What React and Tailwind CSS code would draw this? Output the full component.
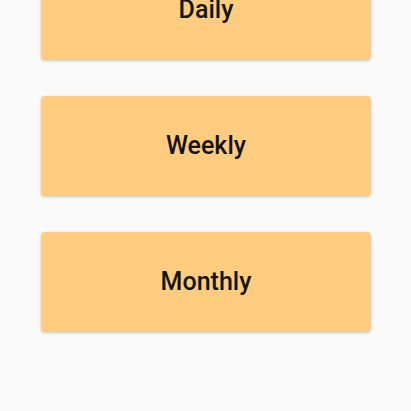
export default function App() {
  const items = ["Daily", "Weekly", "Monthly"];
  return (
    <div className="w-[411px] h-[411px] overflow-hidden bg-[#fafafa]" style={{ fontFamily: "Roboto, 'Liberation Sans', sans-serif" }}>
      <div className="flex flex-col gap-[36px] px-[41px] mt-[-40px]">
        {items.map((t) => (
          <div
            key={t}
            className="h-[100px] w-[330px] rounded-[4px] bg-[#ffcc80] shadow-[0_1px_3px_rgba(0,0,0,0.2)] flex items-center justify-center"
          >
            <span className="text-[25px] font-medium text-[#141414]">{t}</span>
          </div>
        ))}
      </div>
    </div>
  );
}
